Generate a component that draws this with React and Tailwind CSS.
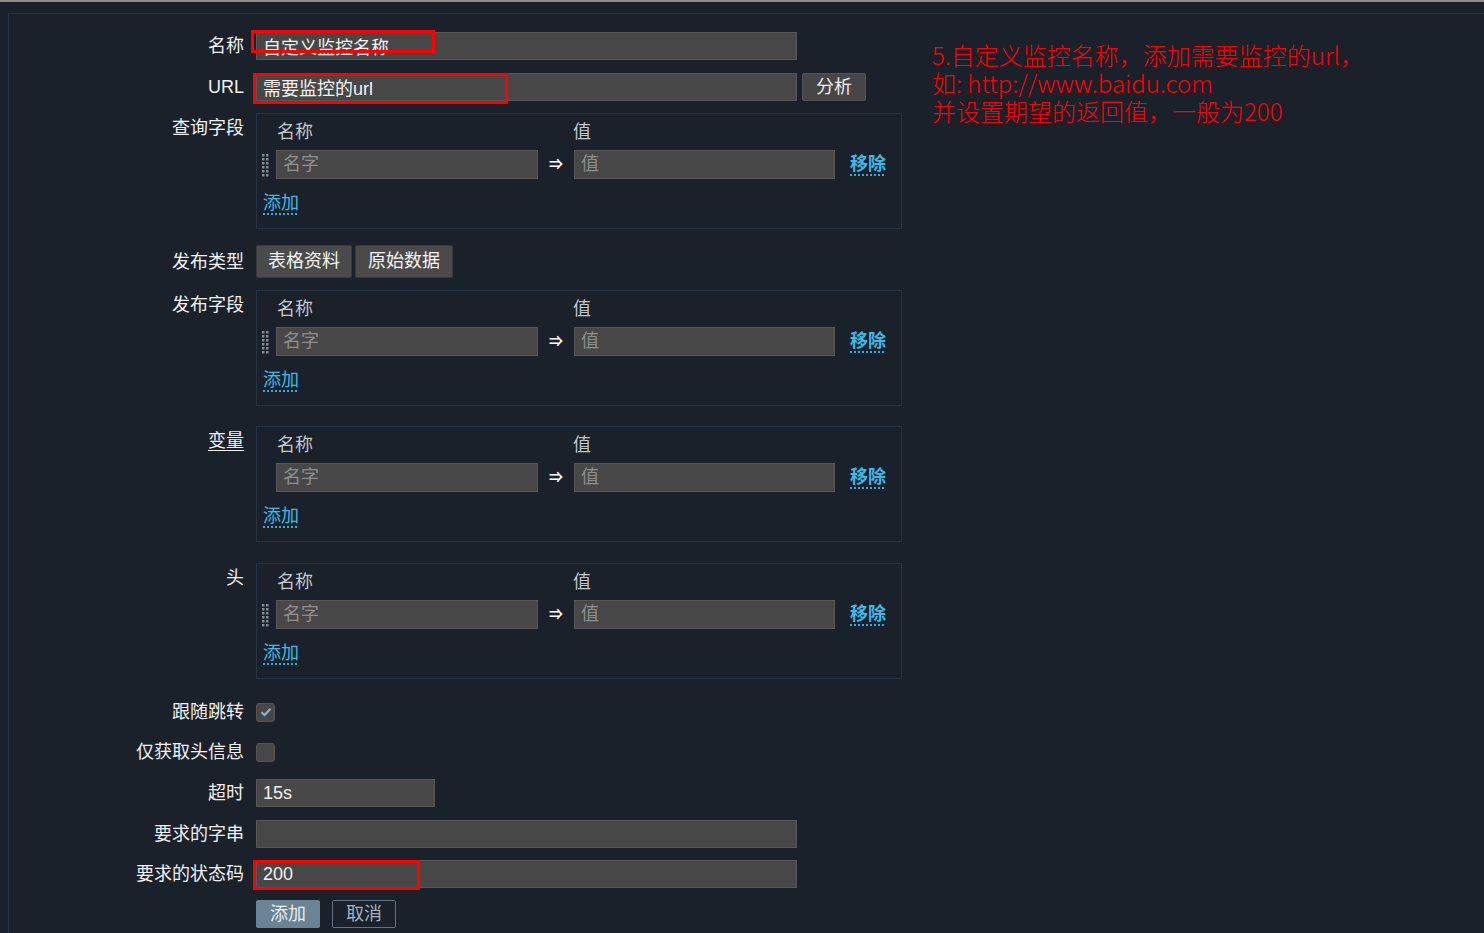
import React from "react";

const font = "font-['Liberation_Sans','Noto_Sans_CJK_SC',sans-serif]";

function Label({ children, boxed, underline }) {
    return (
        <div className={`w-[235px] shrink-0 text-right text-[18px] leading-[28px] text-[#f0f0f0] ${boxed ? "pt-[1px]" : ""}`}>
            <span className={underline ? "underline underline-offset-[3px]" : ""}>{children}</span>
        </div>
    );
}

function Row({ label, boxed, underline, className = "", children }) {
    return (
        <div className={`flex ${boxed ? "items-start" : "items-center"} ${className}`}>
            <Label boxed={boxed} underline={underline}>{label}</Label>
            <div className="ml-[12px] flex items-center">{children}</div>
        </div>
    );
}

function TextInput({ value = "", placeholder = "", width }) {
    return (
        <input
            readOnly
            value={value}
            placeholder={placeholder}
            className={`block ${width} h-[28px] bg-[#474747] border border-[#575757] px-[6px] text-[18px] text-[#f2f2f2] placeholder:text-[#8f8f8f] outline-none`}
        />
    );
}

function DragHandle({ hidden }) {
    return (
        <svg width="15" height="26" viewBox="0 0 15 26" className={`block ${hidden ? "invisible" : ""}`}>
            {[0, 1, 2, 3, 4, 5].map(r =>
                [0, 1].map(c => (
                    <rect key={`${r}-${c}`} x={1 + c * 4} y={2 + r * 4} width="2.5" height="2.5" fill="#7f8b95" />
                ))
            )}
        </svg>
    );
}

function FieldBox({ handle = true }) {
    return (
        <div className="w-[646px] h-[116px] border border-[#263345] pt-[4px] pb-[11px]">
            <div className="flex h-[28px] items-center text-[18px] text-[#c3c8cd]">
                <span className="w-[316px] pl-[20px]">名称</span>
                <span>值</span>
            </div>
            <div className="mt-[4px] flex items-center">
                <div className="w-[4px]" />
                <DragHandle hidden={!handle} />
                <input readOnly placeholder="名字" className="block w-[262px] h-[29px] bg-[#474747] border border-[#575757] px-[6px] text-[18px] placeholder:text-[#8f8f8f] outline-none" />
                <span className="w-[36px] text-center text-[14px] font-bold text-white">⇒</span>
                <input readOnly placeholder="值" className="block w-[261px] h-[29px] bg-[#474747] border border-[#575757] px-[6px] text-[18px] placeholder:text-[#8f8f8f] outline-none" />
                <a className="ml-[15px] text-[18px] font-bold text-[#3cbbe8] underline decoration-dotted underline-offset-[5px]">移除</a>
            </div>
            <div className="mt-[12px] h-[24px] pl-[6px] leading-[24px]">
                <a className="text-[18px] text-[#3cbbe8] underline decoration-dotted underline-offset-[5px]">添加</a>
            </div>
        </div>
    );
}

function Checkbox({ checked }) {
    return (
        <div className="w-[19px] h-[19px] rounded-[3px] bg-[#474747] border border-[#555] flex items-center justify-center">
            {checked && (
                <svg width="12" height="10" viewBox="0 0 12 10">
                    <path d="M1.5 5.2 L4.6 8 L10.5 1.8" stroke="#8fb2cc" strokeWidth="2.2" fill="none" />
                </svg>
            )}
        </div>
    );
}

function RedBox({ className }) {
    return <div className={`absolute border-[3px] border-[#ff0000] pointer-events-none ${className}`} />;
}

export default function App() {
    return (
        <div className={`relative h-[933px] w-full overflow-hidden bg-[#1a212b] ${font}`}>
            <div className="h-[2px] bg-[#8c8c8c]" />

            <div className="ml-2 mt-[11px] w-[1490px] h-[940px] border border-[#243244] pt-[18px]">
                {/* 名称 */}
                <Row label="名称">
                    <div className="relative">
                        <TextInput value="自定义监控名称" width="w-[541px]" />
                        <RedBox className="left-[-5px] top-[-2px] w-[184px] h-[23px]" />
                    </div>
                </Row>

                {/* URL */}
                <Row label="URL" className="mt-[13px]">
                    <div className="relative">
                        <TextInput value="需要监控的url" width="w-[541px]" />
                        <RedBox className="left-[-3px] top-0 w-[255px] h-[31px]" />
                    </div>
                    <button className="ml-[5px] w-[64px] h-[28px] rounded-[2px] bg-[#464646] border border-[#555] text-[18px] text-[#f0f0f0]">分析</button>
                </Row>

                <Row label="查询字段" boxed className="mt-[12px]">
                    <FieldBox />
                </Row>

                <Row label="发布类型" className="mt-[16px]">
                    <div className="flex gap-[3px]">
                        <button className="w-[96px] h-[33px] rounded-[2px] bg-[#4a4a4a] border border-[#3b3b3b] text-[18px] text-[#f4f4f4]">表格资料</button>
                        <button className="w-[98px] h-[33px] rounded-[2px] bg-[#4a4a4a] border border-[#3b3b3b] text-[18px] text-[#f4f4f4]">原始数据</button>
                    </div>
                </Row>

                <Row label="发布字段" boxed className="mt-[12px]">
                    <FieldBox />
                </Row>

                <Row label="变量" boxed underline className="mt-[20px]">
                    <FieldBox handle={false} />
                </Row>

                <Row label="头" boxed className="mt-[21px]">
                    <FieldBox />
                </Row>

                <Row label="跟随跳转" className="mt-[19px] h-[28px]">
                    <Checkbox checked />
                </Row>

                <Row label="仅获取头信息" className="mt-[12px] h-[28px]">
                    <Checkbox />
                </Row>

                <Row label="超时" className="mt-[13px]">
                    <TextInput value="15s" width="w-[179px]" />
                </Row>

                <Row label="要求的字串" className="mt-[13px]">
                    <TextInput width="w-[541px]" />
                </Row>

                <Row label="要求的状态码" className="mt-[12px]">
                    <div className="relative">
                        <TextInput value="200" width="w-[541px]" />
                        <RedBox className="left-[-3px] top-0 w-[167px] h-[30px]" />
                    </div>
                </Row>

                <div className="mt-[12px] flex pl-[247px] gap-[12px]">
                    <button className="w-[64px] h-[28px] rounded-[2px] bg-[#6a8395] text-[18px] text-[#e8eef2]">添加</button>
                    <button className="w-[64px] h-[28px] rounded-[2px] border border-[#5f7282] text-[18px] text-[#a5b0b9]">取消</button>
                </div>
            </div>

            {/* annotation */}
            <div className="absolute left-[932px] top-[41px] text-[24px] leading-[28px] font-light text-[#ff0000] font-['Noto_Sans_CJK_SC','Liberation_Sans',sans-serif]">
                <p className="h-[28px]">5.自定义监控名称，添加需要监控的url，</p>
                <p className="h-[28px]">如: http://www.baidu.com</p>
                <p className="h-[28px]">并设置期望的返回值，一般为200</p>
            </div>
        </div>
    );
}
